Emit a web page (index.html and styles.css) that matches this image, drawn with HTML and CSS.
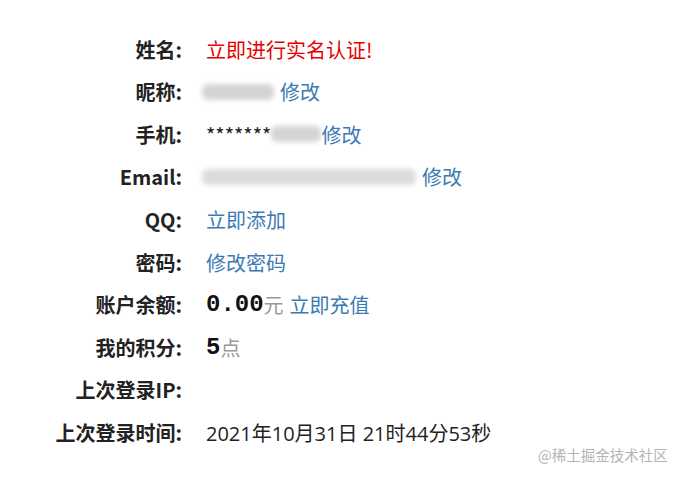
FILE: index.html
```html
<!DOCTYPE html>
<html lang="zh">
<head>
<meta charset="utf-8">
<title>账户信息</title>
<link rel="stylesheet" href="styles.css">
</head>
<body>
<div class="info">
  <div class="label">姓名:</div>
  <div class="value"><span class="warn">立即进行实名认证!</span></div>

  <div class="label">昵称:</div>
  <div class="value"><span class="blur blur-nick"></span><a class="link">修改</a></div>

  <div class="label">手机:</div>
  <div class="value"><span class="stars">*******</span><span class="blur blur-phone"></span><a class="link">修改</a></div>

  <div class="label">Email:</div>
  <div class="value"><span class="blur blur-mail"></span><a class="link">修改</a></div>

  <div class="label">QQ:</div>
  <div class="value"><a class="link">立即添加</a></div>

  <div class="label">密码:</div>
  <div class="value"><a class="link">修改密码</a></div>

  <div class="label">账户余额:</div>
  <div class="value"><span class="num">0.00</span><span class="unit">元</span><a class="link recharge">立即充值</a></div>

  <div class="label">我的积分:</div>
  <div class="value"><span class="num">5</span><span class="unit">点</span></div>

  <div class="label">上次登录IP:</div>
  <div class="value"></div>

  <div class="label">上次登录时间:</div>
  <div class="value date">2021年10月31日 21时44分53秒</div>
</div>
<div class="watermark">@稀土掘金技术社区</div>
</body>
</html>
```

FILE: styles.css
```css
html, body {
  margin: 0;
  padding: 0;
  background: #fff;
}
body {
  margin: 8px;
  font-family: "Noto Sans CJK SC", "Noto Sans", sans-serif;
  font-size: 20px;
  color: #222;
}
.info {
  display: grid;
  grid-template-columns: 174px auto;
  column-gap: 24px;
  grid-auto-rows: 42.55px;
  padding-top: 20px;
  align-items: center;
}
.label {
  text-align: right;
  font-weight: bold;
  color: #222;
  white-space: nowrap;
}
.value {
  display: flex;
  align-items: center;
  white-space: pre;
}
.date {
  font-family: "Open Sans", "Noto Sans CJK SC", sans-serif;
}
.warn { color: #e60000; }
.link { color: #3c7ab4; text-decoration: none; }
.recharge { margin-left: 6px; }
.stars { color: #222; }
.blur {
  display: inline-block;
  height: 16px;
  background: #d4d4d4;
  filter: blur(2.5px);
  border-radius: 6px;
}
.blur-nick { width: 72px; margin-left: -4px; margin-right: 6px; }
.blur-phone { width: 50px; margin-left: 0; }
.blur-mail { width: 214px; margin-left: -4px; margin-right: 6px; background: #dcdcdc; }
.num {
  font-family: "Liberation Mono", "DejaVu Sans Mono", monospace;
  font-weight: bold;
  font-size: 24px;
  color: #111;
}
.unit { color: #999; }
.watermark {
  position: absolute;
  left: 538px;
  top: 444px;
  font-size: 14.5px;
  color: #b4b4b4;
  white-space: nowrap;
}
```
